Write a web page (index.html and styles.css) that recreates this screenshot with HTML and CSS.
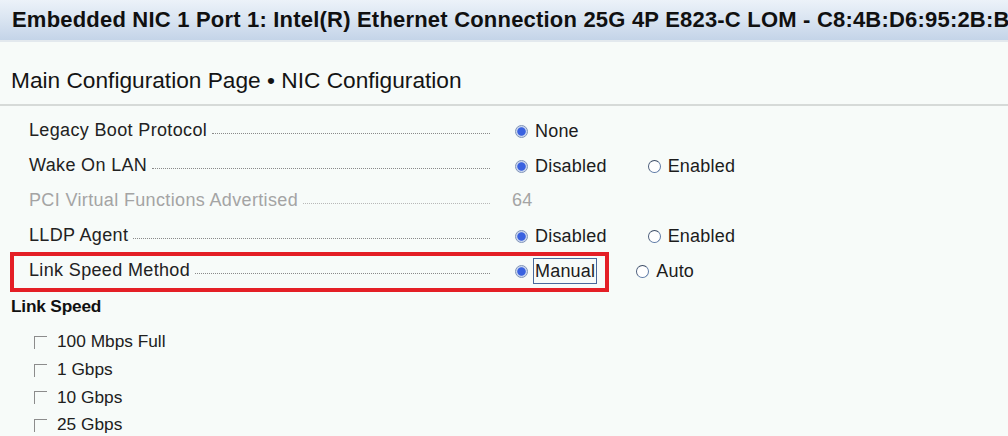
FILE: index.html
```html
<!DOCTYPE html>
<html lang="en">
<head>
<meta charset="utf-8">
<title>NIC Configuration</title>
<link rel="stylesheet" href="styles.css">
</head>
<body>
<header class="titlebar">
  <h1 class="title">Embedded NIC 1 Port 1: Intel(R) Ethernet Connection 25G 4P E823-C LOM - C8:4B:D6:95:2B:B8</h1>
</header>
<div class="subtitle">Main Configuration Page • NIC Configuration</div>
<main class="form">
  <div class="row">
    <div class="label-cell"><span class="label">Legacy Boot Protocol</span><span class="leader"></span></div>
    <div class="values">
      <span class="option"><span class="radio checked"></span><span class="opt-text">None</span></span>
    </div>
  </div>
  <div class="row">
    <div class="label-cell"><span class="label">Wake On LAN</span><span class="leader"></span></div>
    <div class="values">
      <span class="option"><span class="radio checked"></span><span class="opt-text">Disabled</span></span>
      <span class="option"><span class="radio"></span><span class="opt-text">Enabled</span></span>
    </div>
  </div>
  <div class="row disabled">
    <div class="label-cell"><span class="label">PCI Virtual Functions Advertised</span><span class="leader"></span></div>
    <div class="values"><span class="value-text">64</span></div>
  </div>
  <div class="row">
    <div class="label-cell"><span class="label">LLDP Agent</span><span class="leader"></span></div>
    <div class="values">
      <span class="option"><span class="radio checked"></span><span class="opt-text">Disabled</span></span>
      <span class="option"><span class="radio"></span><span class="opt-text">Enabled</span></span>
    </div>
  </div>
  <div class="row highlighted">
    <span class="highlight-box"></span>
    <div class="label-cell"><span class="label">Link Speed Method</span><span class="leader"></span></div>
    <div class="values">
      <span class="option"><span class="radio checked"></span><span class="opt-text focused">Manual</span></span>
      <span class="option"><span class="radio"></span><span class="opt-text">Auto</span></span>
    </div>
  </div>
  <h2 class="section">Link Speed</h2>
  <ul class="checklist">
    <li class="check-row"><span class="checkbox"></span><span class="check-text">100 Mbps Full</span></li>
    <li class="check-row"><span class="checkbox"></span><span class="check-text">1 Gbps</span></li>
    <li class="check-row"><span class="checkbox"></span><span class="check-text">10 Gbps</span></li>
    <li class="check-row"><span class="checkbox"></span><span class="check-text">25 Gbps</span></li>
  </ul>
</main>
</body>
</html>
```
FILE: styles.css
```css
html, body {
  margin: 0;
  padding: 0;
}
body {
  width: 1008px;
  height: 436px;
  overflow: hidden;
  background: #f7fbf9;
  font-family: "Liberation Sans", Arial, sans-serif;
  color: #1e1e1e;
}
.titlebar {
  height: 40px;
  background: linear-gradient(to bottom, #ecf2f9 0%, #d9e4f1 50%, #c4d4e8 100%);
  border-bottom: 2px solid #e3e9ee;
  overflow: hidden;
}
.title {
  margin: 0;
  padding-left: 12px;
  font-size: 22px;
  font-weight: bold;
  letter-spacing: 0.2px;
  line-height: 40px;
  white-space: nowrap;
  color: #101010;
}
.subtitle {
  height: 62px;
  line-height: 77px;
  padding-left: 11px;
  font-size: 22.7px;
  color: #141414;
  border-bottom: 2px solid #d6dad8;
  white-space: nowrap;
}
.form {
  padding-top: 7px;
}
.row {
  position: relative;
  display: flex;
  align-items: center;
  height: 35px;
  font-size: 18px;
  letter-spacing: 0.35px;
}
.label-cell {
  display: flex;
  align-items: center;
  width: 461px;
  margin-left: 29px;
}
.label {
  white-space: nowrap;
  color: #222;
}
.leader {
  flex: 1;
  height: 0;
  margin-left: 5px;
  margin-top: 5px;
  border-bottom: 1px dotted #8a8a8a;
}
.disabled .label,
.disabled .value-text {
  color: #a4a4a4;
}
.disabled .leader {
  border-bottom-color: #b8b8b8;
}
.values {
  display: flex;
  align-items: center;
  gap: 39px;
  margin-left: 25px;
}
.value-text {
  margin-left: -3px;
}
.option {
  display: flex;
  align-items: center;
  gap: 5px;
  letter-spacing: 0.2px;
}
.radio {
  box-sizing: border-box;
  width: 13px;
  height: 13px;
  border-radius: 50%;
  border: 1px solid #5d7aa6;
  border-top-color: #3c4c66;
  border-left-color: #4a5c7a;
  background: #fff;
  margin-top: 2px;
}
.radio.checked {
  border: 1px solid #7f93b8;
  background: radial-gradient(circle, #3a62e0 0, #3a62e0 3.8px, #c8d4ee 4.6px, #e6ecf8 100%);
}
.opt-text {
  padding: 0 1px;
  border: 1px solid transparent;
  line-height: 24px;
  color: #1c1c1c;
}
.opt-text.focused {
  border-color: #48689c;
}
.highlight-box {
  position: absolute;
  left: 10px;
  top: -1px;
  width: 599px;
  height: 40px;
  box-sizing: border-box;
  border: 4px solid #e41f26;
  pointer-events: none;
}
.section {
  margin: 8px 0 0 0;
  padding-left: 11px;
  font-size: 17.3px;
  font-weight: bold;
  letter-spacing: -0.2px;
  line-height: 20px;
  color: #111;
}
.checklist {
  list-style: none;
  margin: 12px 0 0 0;
  padding: 0;
}
.check-row {
  display: flex;
  align-items: center;
  height: 27.7px;
  padding-left: 34px;
  font-size: 17.3px;
}
.checkbox {
  box-sizing: border-box;
  width: 13px;
  height: 13px;
  border-top: 1px solid #8c8c8c;
  border-left: 1px solid #8c8c8c;
  margin-right: 10px;
  margin-top: 1px;
}
.check-text {
  color: #202020;
}
```
